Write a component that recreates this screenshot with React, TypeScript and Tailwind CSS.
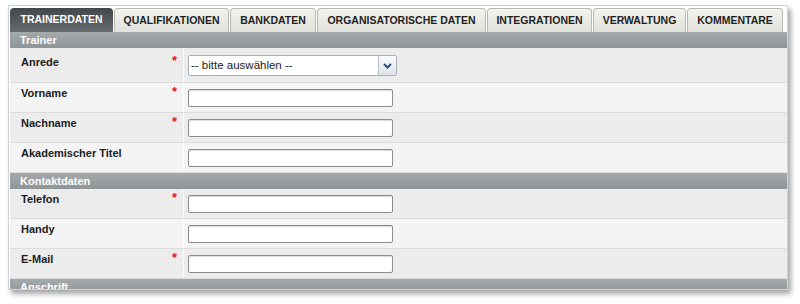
import React from 'react';

const tabs = [
  { label: 'TRAINERDATEN', w: 'w-[103px]', active: true },
  { label: 'QUALIFIKATIONEN', w: 'w-[115px]' },
  { label: 'BANKDATEN', w: 'w-[86px]' },
  { label: 'ORGANISATORISCHE DATEN', w: 'w-[169px]' },
  { label: 'INTEGRATIONEN', w: 'w-[105px]' },
  { label: 'VERWALTUNG', w: 'w-[93px]' },
  { label: 'KOMMENTARE', w: 'w-[96px]' },
];

function SectionHeader({ title }: { title: string }) {
  return (
    <div className="h-[16px] bg-gradient-to-b from-[#a4a9ac] to-[#8f9497] pl-[10px] text-[11px] font-bold leading-[16px] text-white">
      {title}
    </div>
  );
}

function TextInput() {
  return (
    <div className="h-[18px] w-[205px] rounded-[2px] border border-[#8c8c8c] bg-white shadow-[inset_0_1px_1px_rgba(0,0,0,0.15)]" />
  );
}

function SelectBox() {
  return (
    <div className="flex h-[21px] w-[209px] items-stretch rounded-[2px] border border-[#a7afba] bg-white">
      <span className="flex-1 pl-[2px] text-[11.5px] leading-[19px] text-[#222]">-- bitte auswählen --</span>
      <span className="flex w-[18px] items-center justify-center border-l border-[#b7bec8] bg-gradient-to-b from-[#fafbfc] to-[#dfe3e8]">
        <svg width="9" height="6" viewBox="0 0 9 6">
          <path d="M1 1 L4.5 4.5 L8 1" fill="none" stroke="#2c4f8f" strokeWidth="2" />
        </svg>
      </span>
    </div>
  );
}

function Row({
  label,
  required,
  dark,
  select,
}: {
  label: string;
  required?: boolean;
  dark?: boolean;
  select?: boolean;
}) {
  return (
    <div className={`flex border-b border-[#dcdcdc] ${dark ? 'bg-[#ececec]' : 'bg-[#f4f4f4]'}`}>
      <div
        className={`flex w-[174px] justify-between border-r border-[#fbfbfb] pl-[11px] pr-[6px] ${
          select ? 'pt-[7px]' : 'pt-[3px]'
        }`}
      >
        <span className="text-[11px] font-bold leading-[14px] text-[#1c1c1c]">{label}</span>
        {required && <span className="text-[13px] font-bold leading-[11px] text-[#e0141e]">*</span>}
      </div>
      <div className={`pl-[4px] ${select ? 'pb-[6px] pt-[7px]' : 'pb-[5px] pt-[6px]'}`}>
        {select ? <SelectBox /> : <TextInput />}
      </div>
    </div>
  );
}

export default function App() {
  return (
    <div className="h-[304px] w-[800px] overflow-hidden bg-white pl-[8px] pt-[5px] font-['Liberation_Sans',Arial,sans-serif]">
      <div className="h-[285px] w-[780px] overflow-hidden border border-[#d2d2d2] bg-white pl-[1px] pt-[2px] shadow-[3px_4px_5px_rgba(0,0,0,0.35)]">
        {/* Tabs */}
        <div className="flex h-[24px] items-end gap-[1px]">
          {tabs.map((t) => (
            <div
              key={t.label}
              className={`flex h-[24px] ${t.w} items-center justify-center rounded-t-[4px] text-[10.5px] font-bold ${
                t.active
                  ? 'bg-gradient-to-b from-[#43474a] to-[#676c6f] text-white'
                  : 'border border-b-0 border-[#b9b9b3] bg-gradient-to-b from-[#f3f3ef] to-[#e1e1db] text-[#1f1f1f]'
              }`}
            >
              {t.label}
            </div>
          ))}
        </div>

        <SectionHeader title="Trainer" />
        <Row label="Anrede" required dark select />
        <Row label="Vorname" required />
        <Row label="Nachname" required dark />
        <Row label="Akademischer Titel" />

        <SectionHeader title="Kontaktdaten" />
        <Row label="Telefon" required dark />
        <Row label="Handy" />
        <Row label="E-Mail" required dark />

        <SectionHeader title="Anschrift" />
      </div>
    </div>
  );
}
